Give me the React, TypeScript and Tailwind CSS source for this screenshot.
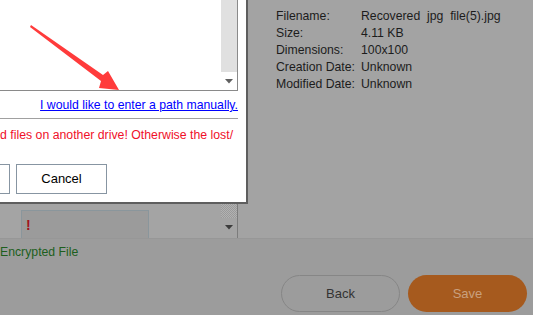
import React from "react";

const font = { fontFamily: '"Liberation Sans", Arial, sans-serif' };

function DownArrow({ color = "#5a5a5a" }: { color?: string }) {
  return (
    <svg width="8" height="5" viewBox="0 0 8 5">
      <polygon points="0,0 8,0 4,4.5" fill={color} />
    </svg>
  );
}

export default function App() {
  const rows: [string, string][] = [
    ["Filename:", "Recovered  jpg  file(5).jpg"],
    ["Size:", "4.11 KB"],
    ["Dimensions:", "100x100"],
    ["Creation Date:", "Unknown"],
    ["Modified Date:", "Unknown"],
  ];
  return (
    <div
      className="relative w-[533px] h-[315px] overflow-hidden bg-[#9c9c9c] flex flex-col"
      style={font}
    >
      {/* underlying page */}
      <div className="flex h-[239px] border-b border-[#979797]">
        <div className="w-[238px] flex border-r border-[#7c7c7c] bg-[#a4a4a4]">
          <div className="flex-1 flex flex-col justify-end relative">
            <div className="absolute left-[84px] top-[192px] text-[14px] leading-[14px] text-[#2a2a2a] whitespace-nowrap">
              2.42
            </div>
            <div className="ml-[21px] w-[128px] h-[28px] border border-b-0 border-[#8a969c] bg-[#9b9b9b] flex items-center pl-[4px]">
              <span className="text-[#a3141c] font-bold text-[14px] leading-[14px]">!</span>
            </div>
          </div>
          <div className="w-[16px] flex flex-col">
            <div className="flex-1 bg-[repeating-conic-gradient(#9a9a9a_0%_25%,#b2b2b2_0%_50%)] bg-[length:2px_2px]" />
            <div className="h-[20px] flex items-center justify-center pb-[1px]">
              <DownArrow color="#3c3c3c" />
            </div>
          </div>
        </div>
        <div className="flex-1 bg-[#a3a3a3] pl-[38px] pt-[8px]">
          {rows.map(([k, v]) => (
            <div key={k} className="flex text-[12.25px] leading-[17px] text-[#1c1c1c] whitespace-pre">
              <div className="w-[85px]">{k}</div>
              <div>{v}</div>
            </div>
          ))}
        </div>
      </div>
      <div className="flex-1 flex flex-col">
        <div className="mt-[6px] text-[12.25px] leading-[14px] text-[#1d5f1d]">Encrypted File</div>
        <div className="flex justify-end gap-[8px] pr-[6px] mt-[16px]">
          <div className="w-[119px] h-[37px] rounded-full border border-[#868686] flex items-center justify-center text-[13px] text-[#333333]">
            Back
          </div>
          <div className="w-[119px] h-[37px] rounded-full bg-[#a65a1e] flex items-center justify-center text-[13px] text-[#c9a07e]">
            Save
          </div>
        </div>
      </div>

      {/* dialog */}
      <div className="absolute left-0 top-0 w-[248px] h-[204px] bg-white border-r-2 border-b-2 border-[#5e5e5e] flex flex-col">
        <div className="w-[238px] h-[91px] border-r border-b border-[#8a8a8a] flex justify-end">
          <div className="w-[16px] flex flex-col">
            <div className="h-[72px] bg-[#e0e0e0]" />
            <div className="flex-1 flex items-center justify-center pt-[1px]">
              <DownArrow color="#606060" />
            </div>
          </div>
        </div>
        <div className="w-[238px] mt-[7px] text-right text-[12.25px] leading-[14px] text-[#0000ff] underline whitespace-nowrap">
          I would like to enter a path manually.
        </div>
        <div className="mt-[6px] w-[238px] h-px bg-[#a0a0a0]" />
        <div className="mt-[9px] text-[12.3px] leading-[14px] text-[#f0102a] whitespace-nowrap">
          d files on another drive! Otherwise the lost/
        </div>
        <div className="mt-[22px] flex gap-[6px] ml-[-81px]">
          <div className="w-[91px] h-[30px] border border-[#8795a2] bg-white" />
          <div className="w-[91px] h-[30px] border border-[#8795a2] bg-white flex items-center justify-center text-[13px] text-black">
            Cancel
          </div>
        </div>
      </div>

      {/* red annotation arrow */}
      <svg className="absolute left-0 top-0 pointer-events-none" width="533" height="315" viewBox="0 0 533 315">
        <polygon
          points="31,25 103,75 108,71 119,90 99,88 101,81 30,27"
          fill="#ff3b3b"
        />
      </svg>
    </div>
  );
}
